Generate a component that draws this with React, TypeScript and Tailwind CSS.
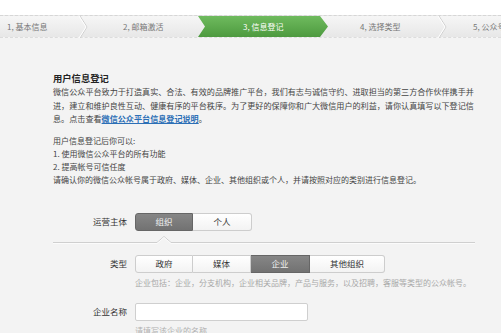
import React from "react";

const font = { fontFamily: '"Noto Sans CJK SC", "Noto Sans", sans-serif' };

function Chevron() {
  return (
    <svg className="absolute right-0 top-0" width="9" height="22" viewBox="0 0 9 22">
      <polyline points="1,0 8,11 1,22" fill="none" stroke="#cfcfcf" strokeWidth="1" />
      <polyline points="0,0 7,11 0,22" fill="none" stroke="#ffffff" strokeWidth="1" />
    </svg>
  );
}

function Seg({
  items,
}: {
  items: { label: string; w: number; active?: boolean }[];
}) {
  return (
    <div className="flex">
      {items.map((it, i) => {
        const first = i === 0;
        const last = i === items.length - 1;
        return (
          <div
            key={it.label}
            style={{ width: it.w }}
            className={
              "h-[18px] flex items-center justify-center text-[8.5px] border " +
              (first ? "rounded-l-[3px] " : "border-l-0 ") +
              (last ? "rounded-r-[3px] " : "") +
              (it.active
                ? "bg-gradient-to-b from-[#868686] to-[#727272] border-[#666] text-[#f0f0f0]"
                : "bg-gradient-to-b from-[#ffffff] to-[#f3f3f3] border-[#cdcdcd] text-[#333]")
            }
          >
            {it.label}
          </div>
        );
      })}
    </div>
  );
}

export default function App() {
  return (
    <div className="w-[501px] h-[333px] overflow-hidden bg-[#f3f3f3] relative" style={font}>
      <div className="h-[15px] bg-white" />
      {/* stepper */}
      <div className="h-[23px] flex border-t border-dashed border-[#d6d6d6] border-b border-b-[#dcdcdc] bg-gradient-to-b from-[#f6f6f6] to-[#e7e7e7] text-[8px] text-[#777] whitespace-nowrap">
        <div className="relative w-[88px] h-full flex items-center pl-[7px]">
          1, 基本信息
          <Chevron />
        </div>
        <div className="relative w-[110px] h-full flex items-center pl-[35px]">2, 邮箱激活</div>
        <div className="relative w-[130px] h-full flex items-center pl-[45px] text-white bg-gradient-to-b from-[#6fbb5e] to-[#4d9a3f] [clip-path:polygon(0_0,calc(100%-8px)_0,100%_50%,calc(100%-8px)_100%,0_100%,7px_50%)]">
          3, 信息登记
        </div>
        <div className="relative w-[119px] h-full flex items-center pl-[32px]">
          4, 选择类型
          <Chevron />
        </div>
        <div className="relative flex-1 h-full flex items-center pl-[26px] overflow-hidden">5, 公众号信息</div>
      </div>

      <div className="pl-[53px] w-[475px]">
        <div className="mt-[34px] text-[9.3px] leading-[13px] font-bold text-[#222]">用户信息登记</div>
        <div className="text-[8.1px] leading-[13.5px] text-[#444] whitespace-nowrap">
          <div>微信公众平台致力于打造真实、合法、有效的品牌推广平台，我们有志与诚信守约、进取担当的第三方合作伙伴携手并</div>
          <div>进，建立和维护良性互动、健康有序的平台秩序。为了更好的保障你和广大微信用户的利益，请你认真填写以下登记信</div>
          <div>
            息。点击查看
            <span className="text-[#2c6fb6] underline font-bold">微信公众平台信息登记说明</span>。
          </div>
        </div>
        <div className="mt-[8px] text-[8px] leading-[13px] text-[#444] whitespace-nowrap">
          <div>用户信息登记后你可以:</div>
          <div>1. 使用微信公众平台的所有功能</div>
          <div>2. 提高帐号可信任度</div>
          <div>请确认你的微信公众帐号属于政府、媒体、企业、其他组织或个人，并请按照对应的类别进行信息登记。</div>
        </div>

        <div className="mt-[27px] flex items-center">
          <div className="w-[74px] pr-[0px] text-right text-[8.5px] text-[#333]">运营主体</div>
          <div className="ml-[8px]">
            <Seg
              items={[
                { label: "组织", w: 58, active: true },
                { label: "个人", w: 59 },
              ]}
            />
          </div>
        </div>

        <svg className="mt-[4px] block" width="422" height="9" viewBox="0 0 422 9">
          <polyline points="0,7.5 104,7.5 111,1.5 118,7.5 422,7.5" fill="none" stroke="#cfcfcf" strokeWidth="1" />
          <polyline points="0,8.5 104,8.5 111,2.5 118,8.5 422,8.5" fill="none" stroke="#fbfbfb" strokeWidth="1" />
        </svg>

        <div className="mt-[11px] flex items-center">
          <div className="w-[74px] text-right text-[8.5px] text-[#333]">类型</div>
          <div className="ml-[8px]">
            <Seg
              items={[
                { label: "政府", w: 58 },
                { label: "媒体", w: 58 },
                { label: "企业", w: 59, active: true },
                { label: "其他组织", w: 75 },
              ]}
            />
          </div>
        </div>
        <div className="mt-[4px] ml-[82px] text-[8px] leading-[12px] text-[#a8a8a8] whitespace-nowrap">
          企业包括：企业，分支机构，企业相关品牌，产品与服务，以及招聘，客服等类型的公众帐号。
        </div>

        <div className="mt-[14px] flex items-center">
          <div className="w-[74px] text-right text-[8.5px] text-[#333]">企业名称</div>
          <div className="ml-[8px] w-[173px] h-[18px] bg-white border border-[#cfcfcf] rounded-[2px]" />
        </div>
        <div className="mt-[4px] ml-[82px] text-[8px] leading-[12px] text-[#b0b0b0] whitespace-nowrap">
          请填写该企业的名称
        </div>
      </div>
    </div>
  );
}
